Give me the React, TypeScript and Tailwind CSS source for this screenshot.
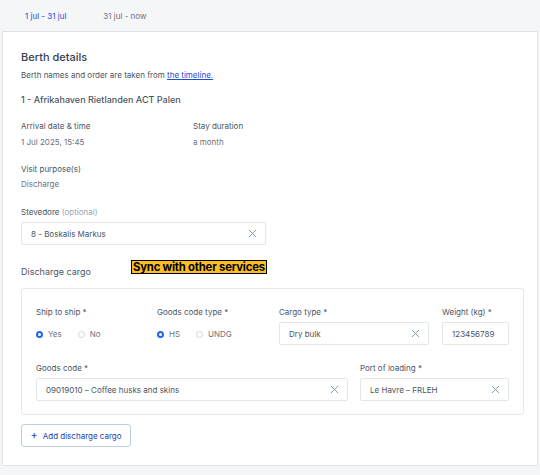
import React from "react";

const font = { fontFamily: "Inter, 'Noto Sans', sans-serif" };

function ClearIcon() {
  return (
    <svg width="9" height="9" viewBox="0 0 10 10" className="shrink-0">
      <path d="M1 1 L9 9 M9 1 L1 9" stroke="#7b93b8" strokeWidth="1" fill="none" />
    </svg>
  );
}

function Field({ value, clear = true, className = "" }: { value: string; clear?: boolean; className?: string }) {
  return (
    <div
      className={`h-[23px] border border-[#e3e6ea] rounded-[2px] bg-white flex items-center justify-between pl-[9px] pr-[8px] text-[8px] text-[#4b5563] ${className}`}
    >
      <span>{value}</span>
      {clear && <ClearIcon />}
    </div>
  );
}

function Radio({ checked, label }: { checked?: boolean; label: string }) {
  return (
    <label className="flex items-center gap-[5px] text-[8px] text-[#6b7280]">
      {checked ? (
        <span className="w-[7px] h-[7px] rounded-full border-[2px] border-[#2563eb] bg-white" />
      ) : (
        <span className="w-[7px] h-[7px] rounded-full border border-[#d1d5db] bg-white" />
      )}
      <span>{label}</span>
    </label>
  );
}

function Label({ children }: { children: React.ReactNode }) {
  return <div className="text-[8px] text-[#4b5563] leading-none">{children}</div>;
}

export default function App() {
  return (
    <div className="w-[540px] h-[475px] bg-[#f5f6f8] overflow-hidden" style={font}>
      {/* period tabs */}
      <div className="h-[31px] flex items-center pl-[25px] gap-[37px] text-[8px]">
        <span className="text-[#1d4ed8]">1 jul - 31 jul</span>
        <span className="text-[#6b7280]">31 jul - now</span>
      </div>

      <div className="mx-[2px] h-[435px] bg-white border border-[#e5e7eb] border-t-[#dcdfe3] pl-[18px] pr-[13px] pt-[20px]">
        <h2 className="text-[11px] font-medium text-[#374151] leading-none">Berth details</h2>
        <p className="mt-[8px] text-[8px] text-[#4b5563] leading-none">
          Berth names and order are taken from{" "}
          <span className="text-[#1d4ed8] underline">the timeline.</span>
        </p>
        <div className="mt-[16px] text-[9px] font-medium text-[#4b5563] leading-none">
          1 - Afrikahaven Rietlanden ACT Palen
        </div>

        <div className="mt-[18px] flex">
          <div className="w-[172px]">
            <Label>Arrival date &amp; time</Label>
            <div className="mt-[8px] text-[8px] text-[#6b7280] leading-none">1 Jul 2025, 15:45</div>
          </div>
          <div>
            <Label>Stay duration</Label>
            <div className="mt-[8px] text-[8px] text-[#6b7280] leading-none">a month</div>
          </div>
        </div>

        <div className="mt-[19px]">
          <Label>Visit purpose(s)</Label>
          <div className="mt-[7px] text-[8px] text-[#6b7280] leading-none">Discharge</div>
        </div>

        <div className="mt-[20px]">
          <Label>
            Stevedore <span className="text-[#9ca3af]">(optional)</span>
          </Label>
          <Field value="8 - Boskalis Markus" className="mt-[6px] w-[245px]" />
        </div>

        <div className="mt-[18px] flex items-center h-[14px]">
          <div className="w-[110px] text-[9px] text-[#4b5563] pt-[4px]">Discharge cargo</div>
          <div className="h-[14px] px-[1px] bg-[#fbbf24] border border-black text-black font-bold text-[11.3px] leading-[12px] tracking-[-0.2px] -mt-[6px]">
            Sync with other services
          </div>
        </div>

        <div className="mt-[11px] w-[503px] border border-[#e5e7eb] rounded-[3px] px-[14px] pt-[19px] pb-[13px]">
          <div className="flex">
            <div className="w-[121px]">
              <Label>Ship to ship *</Label>
              <div className="mt-[12px] flex gap-[16px]">
                <Radio checked label="Yes" />
                <Radio label="No" />
              </div>
            </div>
            <div className="w-[122px]">
              <Label>Goods code type *</Label>
              <div className="mt-[12px] flex gap-[16px]">
                <Radio checked label="HS" />
                <Radio label="UNDG" />
              </div>
            </div>
            <div className="w-[163px]">
              <Label>Cargo type *</Label>
              <Field value="Dry bulk" className="mt-[6px] w-[150px]" />
            </div>
            <div>
              <Label>Weight (kg) *</Label>
              <Field value="123456789" clear={false} className="mt-[6px] w-[67px]" />
            </div>
          </div>

          <div className="mt-[19px] flex">
            <div className="w-[324px]">
              <Label>Goods code *</Label>
              <Field value="09019010 – Coffee husks and skins" className="mt-[6px] w-[312px]" />
            </div>
            <div>
              <Label>Port of loading *</Label>
              <Field value="Le Havre – FRLEH" className="mt-[6px] w-[149px]" />
            </div>
          </div>
        </div>

        <button className="mt-[9px] h-[23px] w-[110px] border border-[#bfcde3] rounded-[3px] flex items-center justify-center gap-[5px] text-[8px] text-[#1e40af]">
          <span className="text-[11px] leading-none -mt-[1px]">+</span>
          <span>Add discharge cargo</span>
        </button>
      </div>
    </div>
  );
}
